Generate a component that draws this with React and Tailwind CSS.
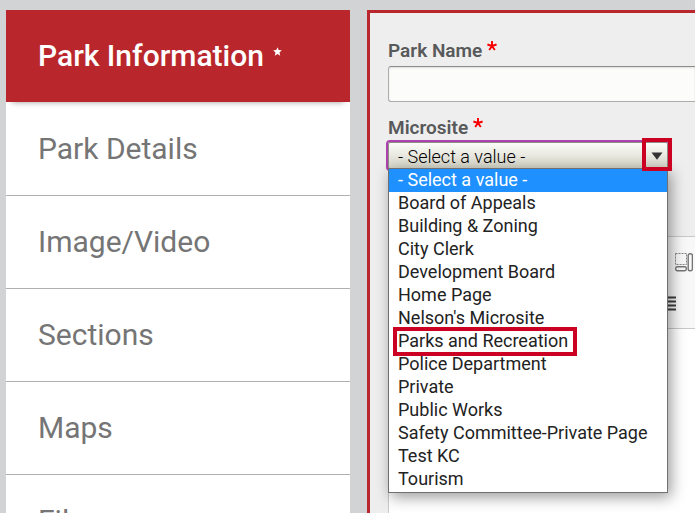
import React, { useState } from "react";

const sections = ["Park Details", "Image/Video", "Sections", "Maps", "Files"];

const microsites = [
  "- Select a value -",
  "Board of Appeals",
  "Building & Zoning",
  "City Clerk",
  "Development Board",
  "Home Page",
  "Nelson's Microsite",
  "Parks and Recreation",
  "Police Department",
  "Private",
  "Public Works",
  "Safety Committee-Private Page",
  "Test KC",
  "Tourism",
];

const Required = () => (
  <svg viewBox="0 0 10 10" className="w-[10px] h-[10px] mt-[2px]" aria-hidden="true">
    <path
      d="M5 5V0M5 5L0.4 3.5M5 5L9.6 3.5M5 5L2.2 9M5 5L7.8 9"
      stroke="#f80000"
      strokeWidth="1.9"
      fill="none"
    />
  </svg>
);

const Sidebar = () => (
  <nav className="w-[344px] shrink-0 bg-white text-[30px] text-[#757575]">
    <a
      href="#information"
      className="flex items-center h-[92px] mb-px px-8 pb-[2px] bg-[#b9272c] text-white font-medium shadow-[0_6px_6px_-6px_rgba(0,0,0,0.4)]"
    >
      Park Information
      <svg viewBox="0 0 10 10" className="w-[9px] h-[9px] ml-[9px] mb-2" aria-hidden="true">
        <path
          d="M5 0.3L6.3 3.4L9.8 3.7L7.2 6L8 9.6L5 7.8L2 9.6L2.8 6L0.2 3.7L3.7 3.4Z"
          fill="white"
        />
      </svg>
    </a>
    {sections.map((name) => (
      <a
        key={name}
        href="#section"
        className="flex items-center h-[93px] px-8 pb-[2px] border-b border-[#b0b0ae]"
      >
        {name}
      </a>
    ))}
  </nav>
);

const MicrositeSelect = () => {
  const [value, setValue] = useState(microsites[0]);
  return (
    <div className="relative w-[280px] text-[18px] text-[#222]">
      <select
        id="microsite"
        value={value}
        onChange={(e) => setValue(e.target.value)}
        className="block appearance-none w-full h-[27px] pl-[9px] pb-[3px] font-light text-black border border-[#8d8d87] rounded-[2px] bg-linear-to-b from-[#fcfcf9] to-[#d5d5c8] outline-2 outline-[#ad42ad]"
      >
        {microsites.map((name) => (
          <option key={name}>{name}</option>
        ))}
      </select>
      <div className="absolute -top-1 -right-1 w-[30px] h-[33px] pt-[2px] border-4 border-[#cb0023] flex items-center justify-center pointer-events-none z-20">
        <svg viewBox="0 0 12 8" className="w-3 h-2" aria-hidden="true">
          <path d="M0.5 0.5H11.5L6 7.8Z" fill="#333" />
        </svg>
      </div>
      <ul
        role="listbox"
        aria-label="Microsite"
        className="absolute top-[26px] left-0 w-full z-10 bg-white border border-[#707070] pb-px shadow-[3px_4px_14px_rgba(0,0,0,0.4)]"
      >
        {microsites.map((name) => (
          <li
            key={name}
            role="option"
            aria-selected={name === value}
            onClick={() => setValue(name)}
            className="relative h-[23px] leading-[21px] pl-[9px] whitespace-nowrap aria-selected:bg-[#1e90ff] aria-selected:text-white"
          >
            {name}
            {name === "Parks and Recreation" && (
              <span className="absolute -top-[3px] left-1 w-[184px] h-[29px] border-4 border-[#cb0023]" />
            )}
          </li>
        ))}
      </ul>
    </div>
  );
};

const Editor = () => (
  <div className="flex-1 flex flex-col mt-[67px] border-t border-l border-[#c9c9c9] bg-white">
    <div className="h-[92px] shrink-0 bg-[#f8f8f8] border-b border-[#c9c9c9]">
      <div className="flex flex-col gap-6 pt-4 pl-[279px]">
        <button aria-label="Show blocks" className="ml-[7px] w-[18px] h-[19px]">
          <svg viewBox="0 0 18 19" className="w-[18px] h-[19px]" fill="none" stroke="#747474">
            <rect x="0.5" y="0.5" width="11" height="11" strokeDasharray="2 1" stroke="#858585" />
            <rect x="0.7" y="13.7" width="10.6" height="4" rx="1.6" strokeWidth="1.4" />
            <rect x="13.2" y="0.7" width="4.2" height="17" rx="1.8" strokeWidth="1.4" />
          </svg>
        </button>
        <button aria-label="Justify" className="-ml-2 w-4 h-[15px]">
          <svg viewBox="0 0 16 15" className="w-4 h-[15px]">
            <path d="M0 1.5H16M0 5.5H16M0 9.5H16M0 13.5H16" stroke="#3c3c3c" strokeWidth="2" />
          </svg>
        </button>
      </div>
    </div>
  </div>
);

const App = () => {
  return (
    <div className="h-screen overflow-hidden flex gap-[17px] pt-[10px] pl-[6px] bg-[#d1d3d4] font-[Roboto,sans-serif]">
      <Sidebar />
      <main className="flex-1 min-w-0 flex flex-col pt-[26px] pl-[18px] bg-[#eee] border-t-3 border-l-3 border-[#b9272c]">
        <label
          htmlFor="parkName"
          className="flex gap-[5px] h-[27px] leading-6 text-[19px] font-semibold text-[#58595b]"
        >
          Park Name <Required />
        </label>
        <input
          id="parkName"
          type="text"
          className="h-9 px-2 shrink-0 border border-r-0 border-[#adadad] border-t-[#8c8c8c] rounded-l-[3px] bg-[#fcfcfa] shadow-[inset_0_1px_2px_rgba(0,0,0,0.12)]"
        />
        <label
          htmlFor="microsite"
          className="flex gap-[5px] mt-[14px] h-[26px] leading-6 text-[19px] font-semibold text-[#58595b]"
        >
          Microsite <Required />
        </label>
        <MicrositeSelect />
        <Editor />
      </main>
    </div>
  );
};

export default App;
